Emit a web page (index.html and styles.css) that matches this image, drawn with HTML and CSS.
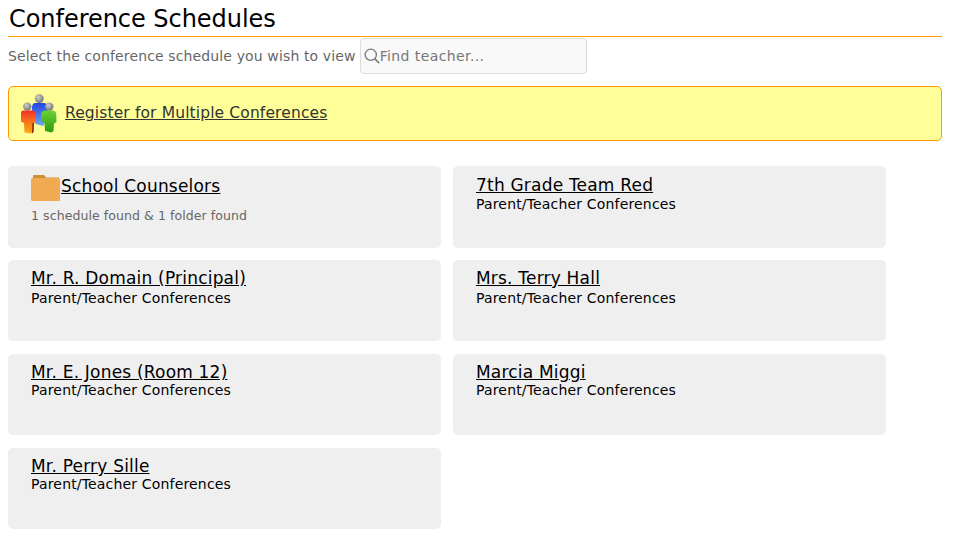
FILE: index.html
```html
<!DOCTYPE html>
<html lang="en">
<head>
<meta charset="utf-8">
<title>Conference Schedules</title>
<link rel="stylesheet" href="styles.css">
</head>
<body>
<h1 class="title">Conference Schedules</h1>
<div class="toolbar">
  <span class="hint">Select the conference schedule you wish to view</span>
  <label class="search">
    <svg class="search-icon" viewBox="0 0 16 16" width="16" height="16" aria-hidden="true"><circle cx="6.8" cy="6.8" r="5.6" fill="none" stroke="#777" stroke-width="1.3"/><path d="M10.9 10.9 15.2 15.2" stroke="#777" stroke-width="1.5" fill="none"/></svg>
    <input class="search-input" type="text" placeholder="Find teacher...">
  </label>
</div>
<div class="banner">
  <svg class="people" viewBox="0 0 36 40" width="36" height="40" aria-hidden="true">
    <defs>
      <linearGradient id="red" x1="0" y1="0" x2="0" y2="1"><stop offset="0" stop-color="#f0302a"/><stop offset=".45" stop-color="#f8701a"/><stop offset="1" stop-color="#fbab10"/></linearGradient>
      <linearGradient id="blue" x1="0" y1="0" x2="0" y2="1"><stop offset="0" stop-color="#2444e4"/><stop offset="1" stop-color="#6ea8f6"/></linearGradient>
      <linearGradient id="green" x1="0" y1="0" x2="0" y2="1"><stop offset="0" stop-color="#6cd034"/><stop offset="1" stop-color="#2c9a10"/></linearGradient>
      <radialGradient id="head" cx=".4" cy=".35" r=".7"><stop offset="0" stop-color="#cfcfcf"/><stop offset="1" stop-color="#6c6c6c"/></radialGradient>
    </defs>
    <circle cx="18.300" cy="4.600" r="4.400" fill="url(#head)"/>
    <path d="M13 9h10.500q2.500.5 3 4l1 14-4 2-1 3-8-2-1-4-3-1 .5-12q.5-3.500 2.500-4z" fill="url(#blue)"/>
    <circle cx="6.300" cy="12.600" r="4.200" fill="url(#head)"/>
    <path d="M2 16.500h9.500q3 .5 3.500 3.500l-.5 8.500-1.500.5-.5 9-1.500 1.500-7.500-1-.5-9.500-3.500-1.500 0-7.500q.5-3 2.500-3.500z" fill="url(#red)"/>
    <path d="M11.500 29l1.500 0-.5 9-1.500 1.500z" fill="#8e1a10"/>
    <circle cx="28.300" cy="12.600" r="4.200" fill="url(#head)"/>
    <path d="M23 16.500h9.500q2.500.5 2.800 3.500l.2 8-2.500 1.500-.5 7.500-2 1.500-6.500-1.500-.5-8-3.500-1.500 0-7.500q.5-3 3-3.500z" fill="url(#green)"/>
  </svg>
  <a class="banner-link" href="#">Register for Multiple Conferences</a>
</div>
<div class="grid">
  <div class="card folder-card">
    <div class="folder-head">
      <svg class="folder" viewBox="0 0 30 30" width="30" height="30" aria-hidden="true"><path d="M2 2q0-1 1-1h10l2 2.500H28V8H2z" fill="#cf8f35"/><rect x="0" y="4" width="29" height="23" rx="1.500" fill="#f2aa52"/></svg>
      <a class="card-link" href="#">School Counselors</a>
    </div>
    <p class="found">1 schedule found &amp; 1 folder found</p>
  </div>
  <div class="card card-top"><a class="card-link" href="#">7th Grade Team Red</a><p class="sub">Parent/Teacher Conferences</p></div>
  <div class="card card-mid"><a class="card-link" href="#">Mr. R. Domain (Principal)</a><p class="sub">Parent/Teacher Conferences</p></div>
  <div class="card card-mid"><a class="card-link" href="#">Mrs. Terry Hall</a><p class="sub">Parent/Teacher Conferences</p></div>
  <div class="card"><a class="card-link" href="#">Mr. E. Jones (Room 12)</a><p class="sub">Parent/Teacher Conferences</p></div>
  <div class="card"><a class="card-link" href="#">Marcia Miggi</a><p class="sub">Parent/Teacher Conferences</p></div>
  <div class="card"><a class="card-link" href="#">Mr. Perry Sille</a><p class="sub">Parent/Teacher Conferences</p></div>
</div>
</body>
</html>
```
FILE: styles.css
```css
* { box-sizing: border-box; }
html, body { margin: 0; background: #fff; }
body { padding: 0 11px 0 8px; font-family: "DejaVu Sans", sans-serif; color: #000; overflow: hidden; }
.title { margin: 0; padding: 5px 0 0 1px; height: 37px; font-size: 24px; letter-spacing: -.04px; line-height: 28px; font-weight: 400; border-bottom: 1px solid #f90; }
.toolbar { display: flex; align-items: center; gap: 4px; height: 37px; color: #666; font-size: 14px; letter-spacing: .13px; }
.search { display: flex; align-items: center; width: 227px; height: 36px; padding-left: 3px; background: #f9f9f9; border: 1px solid #ddd; border-radius: 4px; }
.search-icon { flex: none; }
.search-input { flex: 1; min-width: 0; border: 0; padding: 0; background: transparent; outline: 0; font: 14px "DejaVu Sans", sans-serif; letter-spacing: .4px; color: #666; }
.search-input::placeholder { color: #777; opacity: 1; }
.banner { display: flex; align-items: center; gap: 8px; height: 55px; margin-top: 12px; padding-left: 12px; background: #ff9; border: 1px solid #f90; border-radius: 5px; }
.banner-link { color: #333; font-size: 15.5px; letter-spacing: .13px; margin-bottom: 1px; }
.grid { display: grid; grid-template-columns: 433px 433px; grid-auto-rows: 81px; gap: 13px 12px; margin-top: 25px; }
.card { padding: 8px 23px; background: #efefef; border-radius: 5px; }
.card-top { padding-top: 9px; height: 82px; }
.folder-card { height: 82px; }
.card-link { color: #000; font-size: 17px; letter-spacing: .2px; line-height: 20px; display: inline-block; }
.sub { margin: 0; font-size: 14px; letter-spacing: .17px; line-height: 17px; }
.card-top .sub { margin-top: 1px; }
.card-mid .sub { margin-top: 2px; }
.folder-head { display: flex; align-items: flex-start; }
.folder { flex: none; }
.folder-head .card-link { margin-top: 2px; }
.found { margin: 4px 0 0; font-size: 12.5px; letter-spacing: .08px; line-height: 16px; color: #666; }
```
